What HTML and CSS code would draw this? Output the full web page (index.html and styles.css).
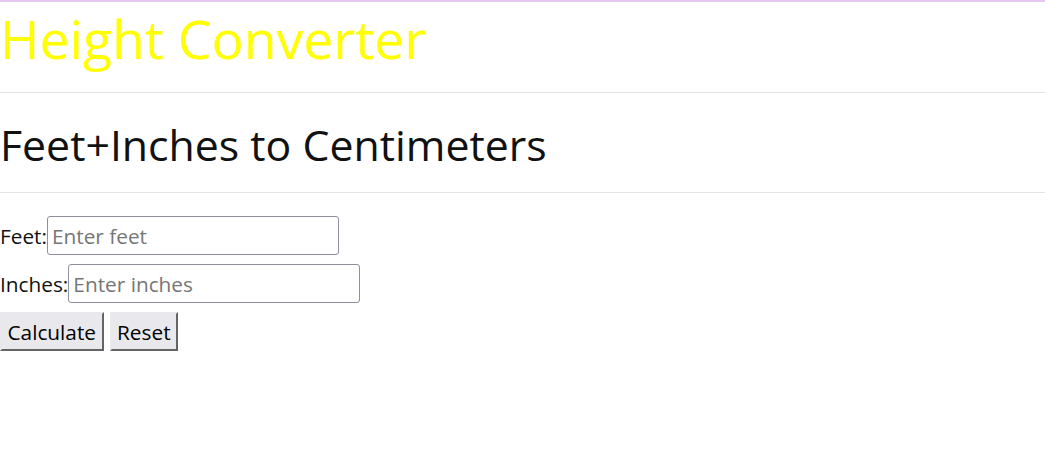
FILE: index.html
```html
<!DOCTYPE html>
<html lang="en">
<head>
<meta charset="utf-8">
<title>Height Converter</title>
<link rel="stylesheet" href="styles.css">
</head>
<body>
<header class="title-block">
  <h1 class="title">Height Converter</h1>
</header>
<hr class="rule">
<section class="sub-block">
  <h2 class="subtitle">Feet+Inches to Centimeters</h2>
</section>
<hr class="rule">
<form class="form">
  <div class="row">
    <label class="label" for="feet">Feet:</label><input class="field" id="feet" type="text" placeholder="Enter feet">
  </div>
  <div class="row">
    <label class="label" for="inches">Inches:</label><input class="field" id="inches" type="text" placeholder="Enter inches">
  </div>
  <div class="row buttons">
    <button class="btn" type="button">Calculate</button>
    <button class="btn" type="reset">Reset</button>
  </div>
</form>
</body>
</html>
```
FILE: styles.css
```css
html, body {
  margin: 0;
  padding: 0;
  background: #ffffff;
}
body {
  border-top: 2px solid #e8c8f2;
  font-family: "Open Sans", "Noto Sans", sans-serif;
  color: #111111;
}
.title-block {
  height: 90px;
}
.title {
  margin: 0;
  font-weight: 400;
  font-size: 53.5px;
  line-height: 74px;
  color: #ffff00;
}
.rule {
  margin: 0;
  border: 0;
  border-top: 1px solid #e3e3e3;
  height: 0;
}
.sub-block {
  box-sizing: border-box;
  height: 99px;
  padding-top: 22px;
}
.subtitle {
  margin: 0;
  font-weight: 400;
  font-size: 42.8px;
  line-height: 60px;
}
.form {
  padding-top: 23px;
  display: flex;
  flex-direction: column;
  gap: 9px;
}
.row {
  display: flex;
  align-items: center;
  height: 39px;
}
.label {
  font-size: 20.8px;
}
.field {
  box-sizing: border-box;
  width: 292px;
  height: 39px;
  margin: 0;
  padding: 0 4px;
  border: 1px solid #8f8f9d;
  border-radius: 3px;
  font-family: inherit;
  font-size: 20.8px;
  color: #111;
}
.field::placeholder {
  color: #767676;
}
.buttons {
  gap: 6px;
}
.btn {
  box-sizing: border-box;
  height: 39px;
  margin: 0;
  padding: 0 5.5px;
  background: #e9e9ed;
  border: 2px outset #b8b8b8;
  border-top-color: #e9e9ed;
  border-left-color: #e9e9ed;
  font-family: inherit;
  font-size: 20.8px;
  color: #000;
}
```
